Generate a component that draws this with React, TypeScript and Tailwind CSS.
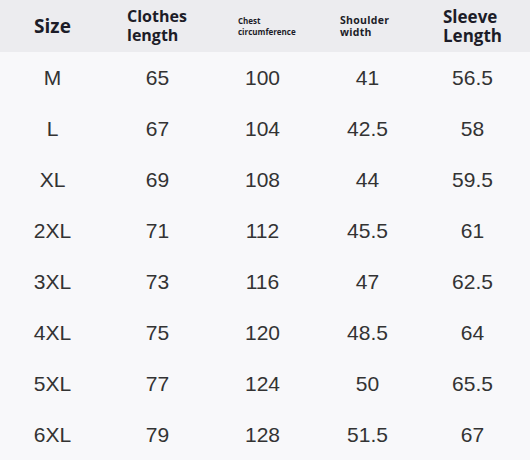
const rows = [
  ['M', '65', '100', '41', '56.5'],
  ['L', '67', '104', '42.5', '58'],
  ['XL', '69', '108', '44', '59.5'],
  ['2XL', '71', '112', '45.5', '61'],
  ['3XL', '73', '116', '47', '62.5'],
  ['4XL', '75', '120', '48.5', '64'],
  ['5XL', '77', '124', '50', '65.5'],
  ['6XL', '79', '128', '51.5', '67'],
]

export default function App() {
  return (
    <div className="h-[460px] w-[530px] overflow-hidden bg-[#f8f8fa] font-['Open_Sans',sans-serif] text-[#1c1c28]">
      {/* header */}
      <div className="grid h-[52px] grid-cols-[105px_105px_105px_105px_110px] items-center bg-[#ececef] font-bold">
        <div className="text-center text-[19px]">Size</div>
        <div className="pl-[22px] text-[16px] leading-[19px]">
          Clothes
          <br />
          length
        </div>
        <div className="pl-[28px] text-[8px] leading-[11px]">
          Chest
          <br />
          circumference
        </div>
        <div className="pl-[25px] text-[10.5px] leading-[12px] tracking-[0.3px]">
          Shoulder
          <br />
          width
        </div>
        <div className="pl-[23px] text-[17px] leading-[19px]">
          Sleeve
          <br />
          Length
        </div>
      </div>
      {/* rows */}
      <div className="flex flex-col font-['Liberation_Sans',sans-serif] text-[21px] text-[#333]">
        {rows.map((r) => (
          <div key={r[0]} className="grid h-[51px] grid-cols-[105px_105px_105px_105px_110px] items-center">
            {r.map((c, i) => (
              <div key={i} className={i === 4 ? 'pr-[5px] text-center' : 'text-center'}>
                {c}
              </div>
            ))}
          </div>
        ))}
      </div>
    </div>
  )
}
